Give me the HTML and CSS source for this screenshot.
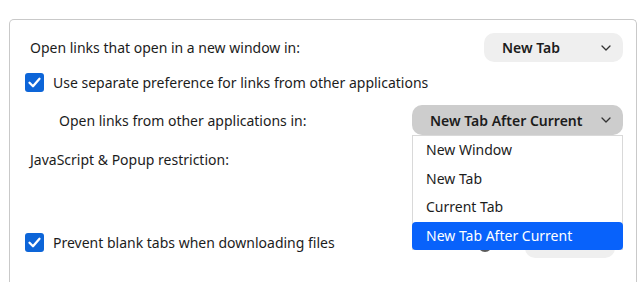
FILE: index.html
```html
<!DOCTYPE html>
<html>
  <head>
    <meta charset="UTF-8" />
    <title>Tab Settings</title>
    <link rel="stylesheet" href="styles.css">
  </head>
  <body>
    <div class="panel">
      <div class="row row-window">
        <span class="label">Open links that open in a new window in:</span>
        <button class="select select-small">
          <span>New Tab</span>
          <svg class="chevron" width="10" height="6" viewBox="0 0 10 6"><polyline points="1,1 5,5 9,1" /></svg>
        </button>
      </div>

      <div class="row check-row row-separate">
        <span class="checkbox">
          <svg width="19" height="19" viewBox="0 0 19 19"><polyline points="4.5,9.8 8,13.2 14.5,5.8" /></svg>
        </span>
        <span class="check-label">Use separate preference for links from other applications</span>
      </div>

      <div class="row row-apps">
        <span class="label label-sub">Open links from other applications in:</span>
        <div class="select-wrap">
          <button class="select select-open">
            <span>New Tab After Current</span>
            <svg class="chevron" width="10" height="6" viewBox="0 0 10 6"><polyline points="1,1 5,5 9,1" /></svg>
          </button>
          <ul class="menu">
            <li class="menu-item">New Window</li>
            <li class="menu-item">New Tab</li>
            <li class="menu-item">Current Tab</li>
            <li class="menu-item selected">New Tab After Current</li>
          </ul>
        </div>
      </div>

      <div class="row row-js">
        <span class="label">JavaScript &amp; Popup restriction:</span>
      </div>

      <div class="row check-row row-blank">
        <span class="checkbox">
          <svg width="19" height="19" viewBox="0 0 19 19"><polyline points="4.5,9.8 8,13.2 14.5,5.8" /></svg>
        </span>
        <span class="check-label">Prevent blank tabs when downloading files</span>
        <span class="row-extra">
          <span class="help-dot"></span>
          <span class="ghost-button"></span>
        </span>
      </div>
    </div>
  </body>
</html>
```

FILE: styles.css
```css
:root {
  --text-color: #1c1c1c;
  --border-color: #c9c9c9;
  --select-bg: #efefef;
  --select-open-bg: #cdcdcd;
  --check-bg: #0d65d8;
  --menu-border: #d9d9d9;
  --highlight-bg: #0862fb;
}

body {
  margin: 0;
  font-family: "Noto Sans", "Open Sans", sans-serif;
  font-size: 14px;
  color: var(--text-color);
  background-color: white;
  overflow: hidden;
}

.panel {
  margin: 19px 6px 0 9px;
  height: 249px;
  padding: 13px 13px 0 15px;
  border: 1px solid var(--border-color);
  border-bottom: none;
  border-radius: 5px 5px 0 0;
}

.row {
  display: flex;
  align-items: center;
}

.row-window {
  height: 29px;
  justify-content: space-between;
}

.row-separate {
  margin-top: 11px;
}

.row-apps {
  margin-top: 13px;
  height: 30px;
  justify-content: space-between;
}

.row-js {
  margin-top: 10px;
  height: 28px;
}

.row-blank {
  margin-top: 60px;
}

.label {
  padding-left: 5px;
}

.label-sub {
  padding-left: 34px;
}

.check-row {
  height: 19px;
}

.checkbox {
  width: 19px;
  height: 19px;
  border-radius: 3px;
  background-color: var(--check-bg);
  flex-shrink: 0;
}

.checkbox svg {
  display: block;
}

.checkbox polyline {
  fill: none;
  stroke: white;
  stroke-width: 2.3;
  stroke-linecap: round;
  stroke-linejoin: round;
}

.check-label {
  margin-left: 9px;
}

.select {
  display: flex;
  align-items: center;
  justify-content: space-between;
  height: 29px;
  padding: 0 12px 0 18px;
  border: none;
  border-radius: 10px;
  background-color: var(--select-bg);
  color: var(--text-color);
  font-family: inherit;
  font-size: 14px;
  font-weight: 600;
}

.select-small {
  width: 139px;
}

.select-wrap {
  position: relative;
}

.select-open {
  width: 211px;
  height: 30px;
  background-color: var(--select-open-bg);
}

.chevron polyline {
  fill: none;
  stroke: #333;
  stroke-width: 1.3;
  stroke-linecap: round;
  stroke-linejoin: round;
}

.menu {
  position: absolute;
  top: 100%;
  left: 0;
  right: 0;
  z-index: 2;
  margin: 0;
  padding: 0;
  list-style: none;
  background-color: white;
  border: 1px solid var(--menu-border);
}

.menu-item {
  height: 28.5px;
  line-height: 28.5px;
  padding-left: 13px;
}

.menu-item.selected {
  margin: 0 -1px -1px;
  padding-left: 14px;
  border-radius: 4px;
  background-color: var(--highlight-bg);
  color: white;
}

.row-extra {
  display: flex;
  align-items: center;
  margin-left: auto;
  margin-right: 8px;
}

.help-dot {
  width: 14px;
  height: 14px;
  border-radius: 50%;
  background-color: #5a5a5a;
  margin-top: 5px;
}

.ghost-button {
  width: 90px;
  height: 28px;
  margin-left: 33px;
  margin-top: 3px;
  border-radius: 10px;
  background-color: var(--select-bg);
}
```
